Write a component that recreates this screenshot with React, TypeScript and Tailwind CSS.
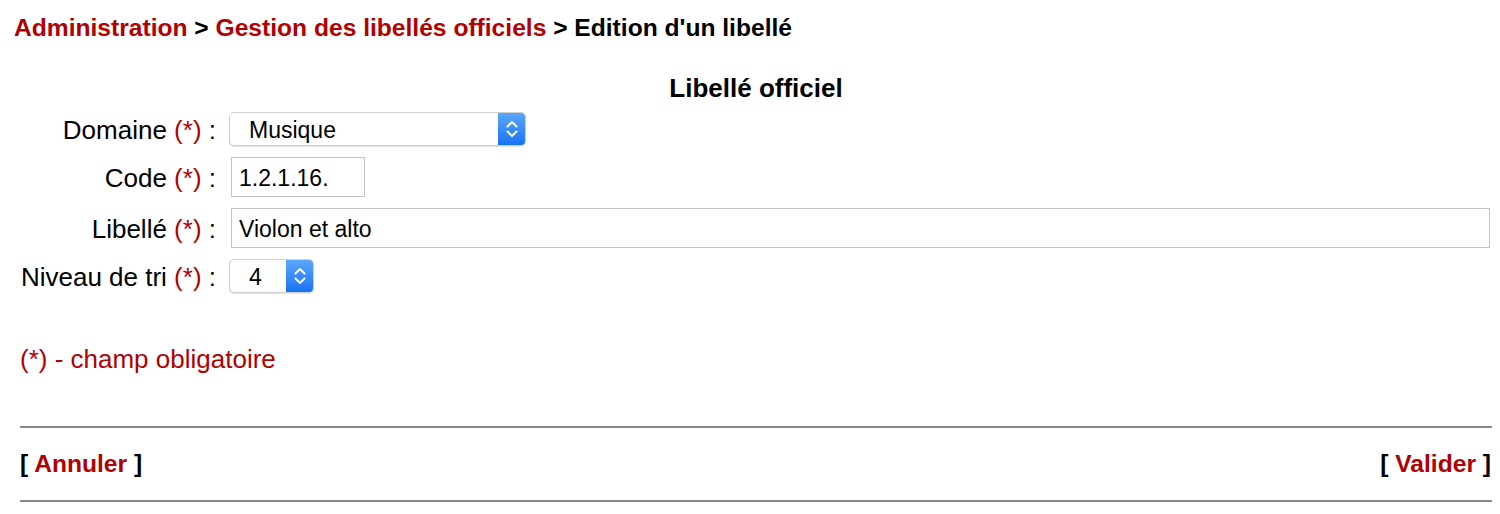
import React from "react";

const RED = "text-[#b00000]";

function Chevrons() {
  return (
    <svg width="14" height="22" viewBox="0 0 14 22" fill="none" stroke="white" strokeWidth="2" strokeLinecap="round" strokeLinejoin="round">
      <path d="M2.5 8.5 L7 4 L11.5 8.5" />
      <path d="M2.5 13.5 L7 18 L11.5 13.5" />
    </svg>
  );
}

function MacSelect({ value, width }: { value: string; width: string }) {
  return (
    <div className={`flex h-[34px] ${width} items-stretch rounded-[5px] border border-[#d0d0d0] bg-white shadow-[0_1px_1px_rgba(0,0,0,0.12)] overflow-hidden`}>
      <div className="flex flex-1 items-center pl-[19px] pt-[2px] text-[23px] text-black">
        {value}
      </div>
      <div className="flex w-[27px] items-center justify-center bg-gradient-to-b from-[#5aa6ff] to-[#1672f2]">
        <Chevrons />
      </div>
    </div>
  );
}

function Label({ text }: { text: string }) {
  return (
    <div className="pt-[2px] text-right text-[26px] leading-none text-black whitespace-nowrap">
      {text} <span className={RED}>(*)</span> :
    </div>
  );
}

export default function App() {
  return (
    <div className="w-[1500px] h-[514px] bg-white" style={{ fontFamily: "'Liberation Sans', Arial, Helvetica, sans-serif" }}>
      <div className="pl-[14px] pt-[14px] text-[24.6px] font-bold leading-[28px] whitespace-nowrap">
        <span className={RED}>Administration</span>
        <span className="text-black"> &gt; </span>
        <span className={RED}>Gestion des libellés officiels</span>
        <span className="text-black"> &gt; Edition d'un libellé</span>
      </div>

      <div className="ml-[20px] mr-[8px]">
        <div className="mt-[32px] text-center text-[26px] font-bold leading-[28px] text-black">Libellé officiel</div>

        <div className="mt-[10px] flex flex-col gap-[11px]">
          <div className="flex items-center">
            <div className="w-[196px]"><Label text="Domaine" /></div>
            <div className="ml-[13px]"><MacSelect value="Musique" width="w-[297px]" /></div>
          </div>
          <div className="flex items-center">
            <div className="w-[196px]"><Label text="Code" /></div>
            <div className="ml-[15px] flex h-[40px] w-[134px] items-center border border-[#c4c4c4] pl-[7px] pt-[2px] text-[23px] text-black">1.2.1.16.</div>
          </div>
          <div className="flex items-center">
            <div className="w-[196px]"><Label text="Libellé" /></div>
            <div className="ml-[15px] mr-[2px] flex h-[40px] flex-1 items-center border border-[#c4c4c4] pl-[7px] pt-[2px] text-[23px] text-black">Violon et alto</div>
          </div>
          <div className="flex items-center">
            <div className="w-[196px]"><Label text="Niveau de tri" /></div>
            <div className="ml-[13px]"><MacSelect value="4" width="w-[85px]" /></div>
          </div>
        </div>

        <div className={`mt-[52px] text-[26px] leading-[28px] ${RED}`}>(*) - champ obligatoire</div>

        <div className="mt-[53px] h-[2px] bg-[#888888]" />
        <div className="flex h-[72px] items-center justify-between pr-[1px] text-[24.6px] font-bold text-black">
          <div>[ <span className={RED}>Annuler</span> ]</div>
          <div>[ <span className={RED}>Valider</span> ]</div>
        </div>
        <div className="h-[2px] bg-[#888888]" />
      </div>
    </div>
  );
}
